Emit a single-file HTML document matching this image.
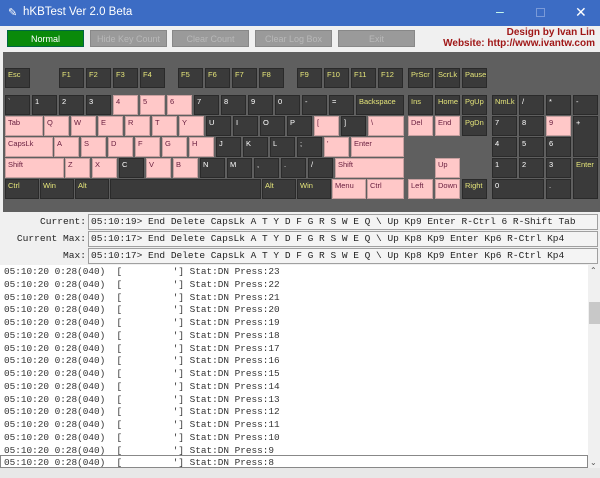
<!DOCTYPE html>
<html><head><meta charset="utf-8"><style>
*{margin:0;padding:0;box-sizing:border-box}
body{width:600px;height:478px;overflow:hidden;background:#f0f0f0;font-family:"Liberation Sans",sans-serif;position:relative}
.a{position:absolute}
#title{left:0;top:0;width:600px;height:26px;background:#3c6cc4;color:#fff;font-size:11.5px}
.btn{top:30px;height:17px;background:#9a9a9a;color:#b8b8b8;font-size:9px;text-align:center;line-height:17px;border:1px solid #888}
#panel{left:3px;top:52px;width:597px;height:160px;background:#5f5f5f}
.k{position:absolute;width:25px;height:20px;background:#3a3a3a;border:1px solid #2a2a2a;color:#fff;font-size:7.5px;padding:1px 2px;line-height:9px;font-family:"Liberation Sans",sans-serif}
.y{color:#e6e67a}
.p{background:#ffc8c8;color:#6a2040;border-color:#c8a0a0}
.lbl{font-family:"Liberation Mono",monospace;font-size:9.6px;color:#222;text-align:right;width:86px;left:0}
.fld{left:88px;width:510px;height:16px;background:#f4f4f4;border:1px solid #a0a0a0;font-family:"Liberation Mono",monospace;font-size:9.5px;color:#222;line-height:14px;padding-left:2px;white-space:pre;overflow:hidden}
#log{left:0;top:265px;width:588px;height:203px;overflow:hidden;background:#fff;font-family:"Liberation Mono",monospace;font-size:9.4px;color:#333;white-space:pre;line-height:12.75px;padding-left:4px;padding-top:1px}
</style></head><body>
<div id="title" class="a"><span class="a" style="left:8px;top:6px;font-size:11px">&#9998;</span><span class="a" style="left:23px;top:6px">hKBTest Ver 2.0 Beta</span><span class="a" style="left:496px;top:3px;font-size:14px;color:#cfe">&#8211;</span><span class="a" style="left:536px;top:8px;width:9px;height:9px;border:1px solid #7a9ad8"></span><span class="a" style="left:575px;top:4px;font-size:14px">&#10005;</span></div>
<div class="a btn" style="left:7px;width:77px;background:#0a8a0a;color:#fff;border-color:#064">Normal</div>
<div class="a btn" style="left:90px;width:77px">Hide Key Count</div>
<div class="a btn" style="left:172px;width:77px">Clear Count</div>
<div class="a btn" style="left:255px;width:77px">Clear Log Box</div>
<div class="a btn" style="left:338px;width:77px">Exit</div>
<div class="a" style="left:420px;top:27px;width:175px;text-align:right;color:#a01818;font-weight:bold;font-size:10px;line-height:11px">Design by Ivan Lin<br>Website: http://www.ivantw.com</div>
<div id="panel" class="a"></div>
<div class="k y" style="left:5px;top:68px">Esc</div>
<div class="k y" style="left:59px;top:68px">F1</div><div class="k y" style="left:86px;top:68px">F2</div><div class="k y" style="left:113px;top:68px">F3</div><div class="k y" style="left:140px;top:68px">F4</div>
<div class="k y" style="left:178px;top:68px">F5</div><div class="k y" style="left:205px;top:68px">F6</div><div class="k y" style="left:232px;top:68px">F7</div><div class="k y" style="left:259px;top:68px">F8</div>
<div class="k y" style="left:297px;top:68px">F9</div><div class="k y" style="left:324px;top:68px">F10</div><div class="k y" style="left:351px;top:68px">F11</div><div class="k y" style="left:378px;top:68px">F12</div>
<div class="k y" style="left:408px;top:68px">PrScr</div><div class="k y" style="left:435px;top:68px">ScrLk</div><div class="k y" style="left:462px;top:68px">Pause</div>
<div class="k" style="left:5px;top:95px">`</div><div class="k" style="left:32px;top:95px">1</div><div class="k" style="left:59px;top:95px">2</div><div class="k" style="left:86px;top:95px">3</div>
<div class="k p" style="left:113px;top:95px">4</div><div class="k p" style="left:140px;top:95px">5</div><div class="k p" style="left:167px;top:95px">6</div>
<div class="k" style="left:194px;top:95px">7</div><div class="k" style="left:221px;top:95px">8</div><div class="k" style="left:248px;top:95px">9</div><div class="k" style="left:275px;top:95px">0</div><div class="k" style="left:302px;top:95px">-</div><div class="k" style="left:329px;top:95px">=</div>
<div class="k y" style="left:356px;top:95px;width:48px">Backspace</div>
<div class="k y" style="left:408px;top:95px">Ins</div><div class="k y" style="left:435px;top:95px">Home</div><div class="k y" style="left:462px;top:95px">PgUp</div>
<div class="k y" style="left:492px;top:95px">NmLk</div><div class="k" style="left:519px;top:95px">/</div><div class="k" style="left:546px;top:95px">*</div><div class="k" style="left:573px;top:95px">-</div>
<div class="k p" style="left:5px;top:116px;width:38px">Tab</div>
<div class="k p" style="left:44px;top:116px">Q</div><div class="k p" style="left:71px;top:116px">W</div><div class="k p" style="left:98px;top:116px">E</div><div class="k p" style="left:125px;top:116px">R</div><div class="k p" style="left:152px;top:116px">T</div><div class="k p" style="left:179px;top:116px">Y</div>
<div class="k" style="left:206px;top:116px">U</div><div class="k" style="left:233px;top:116px">I</div><div class="k" style="left:260px;top:116px">O</div><div class="k" style="left:287px;top:116px">P</div>
<div class="k p" style="left:314px;top:116px">[</div><div class="k" style="left:341px;top:116px">]</div><div class="k p" style="left:368px;top:116px;width:36px">\</div>
<div class="k p" style="left:408px;top:116px">Del</div><div class="k p" style="left:435px;top:116px">End</div><div class="k y" style="left:462px;top:116px">PgDn</div>
<div class="k" style="left:492px;top:116px">7</div><div class="k" style="left:519px;top:116px">8</div><div class="k p" style="left:546px;top:116px">9</div><div class="k" style="left:573px;top:116px;height:41px">+</div>
<div class="k p" style="left:5px;top:137px;width:48px">CapsLk</div>
<div class="k p" style="left:54px;top:137px">A</div><div class="k p" style="left:81px;top:137px">S</div><div class="k p" style="left:108px;top:137px">D</div><div class="k p" style="left:135px;top:137px">F</div><div class="k p" style="left:162px;top:137px">G</div><div class="k p" style="left:189px;top:137px">H</div>
<div class="k" style="left:216px;top:137px">J</div><div class="k" style="left:243px;top:137px">K</div><div class="k" style="left:270px;top:137px">L</div><div class="k" style="left:297px;top:137px">;</div>
<div class="k p" style="left:324px;top:137px">'</div><div class="k p" style="left:351px;top:137px;width:53px">Enter</div>
<div class="k" style="left:492px;top:137px">4</div><div class="k" style="left:519px;top:137px">5</div><div class="k" style="left:546px;top:137px">6</div>
<div class="k p" style="left:5px;top:158px;width:59px">Shift</div>
<div class="k p" style="left:65px;top:158px">Z</div><div class="k p" style="left:92px;top:158px">X</div><div class="k" style="left:119px;top:158px">C</div><div class="k p" style="left:146px;top:158px">V</div><div class="k p" style="left:173px;top:158px">B</div>
<div class="k" style="left:200px;top:158px">N</div><div class="k" style="left:227px;top:158px">M</div><div class="k" style="left:254px;top:158px">,</div><div class="k" style="left:281px;top:158px">.</div><div class="k" style="left:308px;top:158px">/</div>
<div class="k p" style="left:335px;top:158px;width:69px">Shift</div>
<div class="k p" style="left:435px;top:158px">Up</div>
<div class="k" style="left:492px;top:158px">1</div><div class="k" style="left:519px;top:158px">2</div><div class="k" style="left:546px;top:158px">3</div><div class="k y" style="left:573px;top:158px;height:41px">Enter</div>
<div class="k y" style="left:5px;top:179px;width:34px">Ctrl</div><div class="k y" style="left:40px;top:179px;width:34px">Win</div><div class="k y" style="left:75px;top:179px;width:34px">Alt</div>
<div class="k" style="left:110px;top:179px;width:151px"></div>
<div class="k y" style="left:262px;top:179px;width:34px">Alt</div><div class="k y" style="left:297px;top:179px;width:34px">Win</div>
<div class="k p" style="left:332px;top:179px;width:34px">Menu</div><div class="k p" style="left:367px;top:179px;width:37px">Ctrl</div>
<div class="k p" style="left:408px;top:179px">Left</div><div class="k p" style="left:435px;top:179px">Down</div><div class="k y" style="left:462px;top:179px">Right</div>
<div class="k" style="left:492px;top:179px;width:52px">0</div><div class="k" style="left:546px;top:179px">.</div>
<div class="a lbl" style="top:216px">Current:</div>
<div class="a fld" style="top:214px">05:10:19&gt; End Delete CapsLk A T Y D F G R S W E Q \ Up Kp9 Enter R-Ctrl 6 R-Shift Tab</div>
<div class="a lbl" style="top:233px">Current Max:</div>
<div class="a fld" style="top:231px">05:10:17&gt; End Delete CapsLk A T Y D F G R S W E Q \ Up Kp8 Kp9 Enter Kp6 R-Ctrl Kp4</div>
<div class="a lbl" style="top:250px">Max:</div>
<div class="a fld" style="top:248px">05:10:17&gt; End Delete CapsLk A T Y D F G R S W E Q \ Up Kp8 Kp9 Enter Kp6 R-Ctrl Kp4</div>
<div id="log" class="a">05:10:20 0:28(040)  [         '] Stat:DN Press:23
05:10:20 0:28(040)  [         '] Stat:DN Press:22
05:10:20 0:28(040)  [         '] Stat:DN Press:21
05:10:20 0:28(040)  [         '] Stat:DN Press:20
05:10:20 0:28(040)  [         '] Stat:DN Press:19
05:10:20 0:28(040)  [         '] Stat:DN Press:18
05:10:20 0:28(040)  [         '] Stat:DN Press:17
05:10:20 0:28(040)  [         '] Stat:DN Press:16
05:10:20 0:28(040)  [         '] Stat:DN Press:15
05:10:20 0:28(040)  [         '] Stat:DN Press:14
05:10:20 0:28(040)  [         '] Stat:DN Press:13
05:10:20 0:28(040)  [         '] Stat:DN Press:12
05:10:20 0:28(040)  [         '] Stat:DN Press:11
05:10:20 0:28(040)  [         '] Stat:DN Press:10
05:10:20 0:28(040)  [         '] Stat:DN Press:9
05:10:20 0:28(040)  [         '] Stat:DN Press:8</div>
<div class="a" style="left:0;top:455px;width:588px;height:13px;border:1px solid #888"></div>
<div class="a" style="left:588px;top:265px;width:12px;height:203px;background:#f0f0f0"></div>
<div class="a" style="left:590px;top:266px;font-size:8px;color:#555">&#8963;</div>
<div class="a" style="left:589px;top:302px;width:11px;height:22px;background:#c8c8c8"></div>
<div class="a" style="left:590px;top:458px;font-size:8px;color:#555">&#8964;</div>
<div class="a" style="left:0;top:468px;width:600px;height:10px;background:#e8e8e8"></div>
</body></html>
